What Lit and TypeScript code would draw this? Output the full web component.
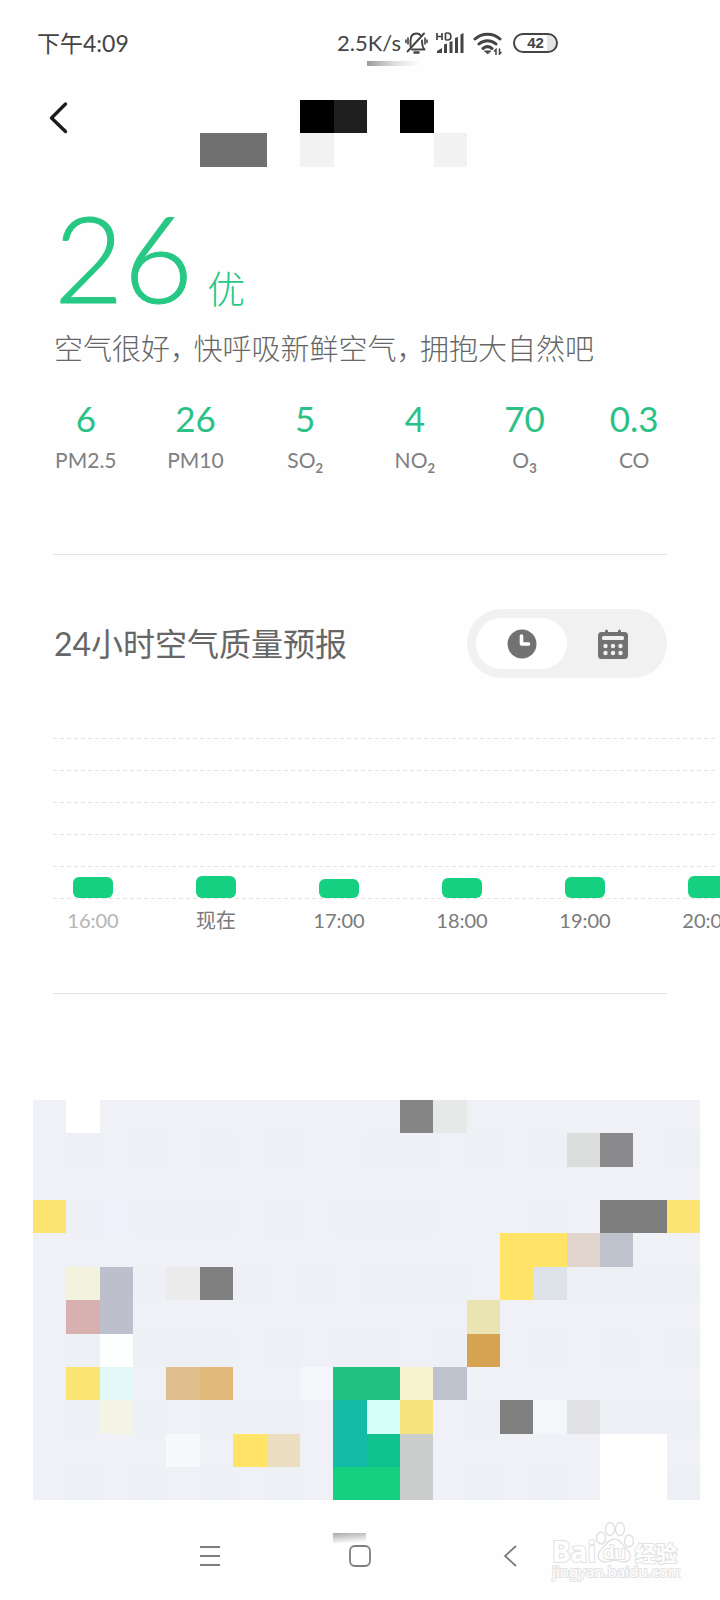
import { LitElement, html, css, svg } from "lit";
import { customElement, property, state } from "lit/decorators.js";
import { styleMap } from "lit/directives/style-map.js";

/** A coarse tile grid; each character of a row is a key of the palette. */
@customElement("tile-grid")
export class TileGrid extends LitElement {
  @property({ attribute: false }) rows: string[] = [];
  @property({ attribute: false }) palette: Record<string, string> = {};

  static styles = css`
    :host { display: block; }
    .grid { display: grid; }
    .cell { aspect-ratio: 1; }
  `;

  render() {
    const cols = this.rows[0]?.length ?? 1;
    return html`<div class="grid" style=${styleMap({ gridTemplateColumns: `repeat(${cols}, 1fr)` })}>
      ${this.rows.map((row) => [...row].map((key) =>
        html`<div class="cell" style=${styleMap({ background: this.palette[key] ?? "transparent" })}></div>`))}
    </div>`;
  }
}

const HEADER_ROWS = ["...AB.A.", "CC.D...D"];
const HEADER_PALETTE = { A: "#000", B: "#1f1f1f", C: "#707070", D: "#f2f2f2" };

const MAP_ROWS = [
  ".w.........ab.......",
  ",;,;,;,;,,;;,;,;cd,;",
  "....................",
  "y;v;;;.;,;;;,,,;,eey",
  "..............YYpq..",
  ",kr;tu;,;,;;;,Yx;;;;",
  ".mr..........n......",
  ",;W;;;.;,;;.;o.;,;,;",
  ".yi,gh..jGGlq.......",
  ",;f;,;;;.TMz.;uAB;;;",
  "....C.YD.TNE.....ww.",
  ",;,;,;,;.KKE,;,;,ww;",
];

const MAP_PALETTE: Record<string, string> = {
  ".": "#f0f1f6", ",": "#eff1f6", ";": "#edf0f5", v: "#f0f0fa",
  w: "#ffffff", W: "#fdffff", a: "#858585", b: "#e7e8e8", c: "#dbdcdc", d: "#8a8a8c",
  e: "#7f7e7f", y: "#fbe472", Y: "#ffe468", p: "#e0d4cc", q: "#bdc2cc",
  k: "#f3f2dc", r: "#bdc0cc", t: "#ebebeb", u: "#808080", x: "#dde2e9",
  m: "#d8b0b0", n: "#eae4b3", o: "#d6a352", i: "#e2f8f6", g: "#e0bd8d", h: "#e0b878",
  j: "#f5f6fa", G: "#21c180", l: "#f8f2cf", f: "#f3f3e6", T: "#13bca4", M: "#d3fff8",
  z: "#f7e37c", A: "#f3f7fa", B: "#e2e2e4", C: "#f8f9fb", D: "#ebdec1", N: "#10c38e",
  E: "#cccdcd", K: "#14d080",
};

interface Pollutant { value: string; name: string; sub?: string; }
const POLLUTANTS: Pollutant[] = [
  { value: "6", name: "PM2.5" },
  { value: "26", name: "PM10" },
  { value: "5", name: "SO", sub: "2" },
  { value: "4", name: "NO", sub: "2" },
  { value: "70", name: "O", sub: "3" },
  { value: "0.3", name: "CO" },
];

const HOURS = [
  { label: "16:00", size: 21, past: true },
  { label: "现在", size: 22 },
  { label: "17:00", size: 19 },
  { label: "18:00", size: 20 },
  { label: "19:00", size: 21 },
  { label: "20:00", size: 22 },
];

const ADVICE = ["空气很好，", "快呼吸新鲜空气，", "拥抱大自然吧"];

@customElement("app-root")
export class AppRoot extends LitElement {
  @state() private view: "hour" | "day" = "hour";

  static styles = css`
    :host {
      display: block;
      background: #fefefe;
      color: #666;
      font-family: Lato, "Noto Sans CJK SC", sans-serif;
      overflow: hidden;
    }
    button { appearance: none; border: 0; padding: 0; margin: 0; background: none; display: grid; place-items: center; cursor: pointer; }
    svg { display: block; }
    h2, p, ul, dl, dd { margin: 0; padding: 0; font-weight: inherit; }

    .status { display: flex; align-items: center; height: 61px; padding: 24px 0 0 37px; box-sizing: border-box; color: #444; font-size: 22px; line-height: 36px; }
    .clock { width: 300px; font-size: 23px; }
    .speed { width: 68px; }
    .bell { margin-right: 8px; }
    .signal { margin-right: 8px; }
    .battery { margin-left: 11px; display: grid; place-items: center; box-sizing: border-box; width: 45px; height: 20px; border: 2px solid #444; border-radius: 10px; font: 700 15px/16px "Liberation Sans", sans-serif; background: linear-gradient(90deg, transparent 32px, #e4e4e4 32px) content-box; }
    .shade { width: 66px; height: 5px; margin-left: 367px; background: linear-gradient(100deg, #999, #ddd 40%, #fefefe 80%); }

    .header { display: flex; align-items: flex-start; padding-top: 34px; height: 67px; }
    .back { width: 36px; height: 34px; margin-left: 42px; margin-right: 122px; }
    .place { width: 267px; }

    .summary { padding: 20px 54px 0; }
    .index { display: flex; align-items: baseline; gap: 14px; color: #26c884; }
    .aqi { font-size: 120px; line-height: 140px; font-weight: 300; -webkit-text-stroke: 1px; }
    .level { font-size: 38px; line-height: 48px; font-weight: 300; }
    .advice { display: flex; gap: 9px; margin-top: 2px; font-size: 29px; line-height: 40px; font-weight: 300; white-space: nowrap; font-feature-settings: "halt"; }

    .pollutants { display: grid; grid-template-columns: repeat(6, 1fr); padding: 24px 31px 0; margin-bottom: 77px; }
    .pollutant { display: flex; flex-direction: column-reverse; align-items: center; }
    .value { color: #2bc186; font-size: 35px; line-height: 50px; }
    .name { color: #808080; font-size: 21px; line-height: 34px; }
    .name sub { font-size: 13px; line-height: 0; font-weight: 700; vertical-align: -5px; }

    .rule { height: 1px; border: 0; margin: 0 53px; background: #e3e3e3; }

    .forecast { margin-bottom: 58px; }
    .forecast-head { display: flex; align-items: center; justify-content: space-between; padding: 54px 53px 0 54px; }
    .title { font-size: 32px; line-height: 44px; }
    .toggle { display: flex; box-sizing: border-box; width: 200px; height: 69px; padding: 9px; border-radius: 35px; background: #f1f1f1; }
    .toggle button { flex: 1; border-radius: 26px; color: #727272; }
    .toggle button[aria-pressed="true"] { background: #fff; }

    .chart { margin: 60px 0 0 53px; }
    .lines { display: grid; align-content: space-between; height: 161px; margin-right: 3px; }
    .line { height: 1px; background: repeating-linear-gradient(90deg, #e3e5e4 0 4px, transparent 4px 7px); }
    .hours { list-style: none; display: flex; gap: 83px; padding-left: 20px; margin-top: -23px; }
    .hour { flex: none; width: 40px; display: flex; flex-direction: column; align-items: center; }
    .slot { display: flex; align-items: flex-end; height: 22px; width: 100%; }
    .bar { width: 100%; border-radius: 6px; background: #14d080; }
    .time { font-size: 20px; line-height: 30px; margin-top: 7px; white-space: nowrap; color: #7a7a7a; }
    .past { color: #b5b5b5; }

    .map { margin: 106px 20px 0 33px; }

    .nav-shade { width: 33px; height: 10px; margin: 33px 0 0 333px; background: linear-gradient(175deg, #aaa, #fefefe 90%); }
    .nav { position: relative; display: flex; justify-content: center; padding-bottom: 31px; }
    .nav button { width: 150px; height: 26px; }
    .watermark { position: absolute; right: 39px; top: -24px; width: 130px; height: 66px; }
    .mark-text { font-family: "Noto Sans", "Noto Sans CJK SC", sans-serif; fill: #fefefe; stroke: #e2e2e2; stroke-width: 2px; paint-order: stroke; }
  `;

  private renderToggle() {
    return html`<div class="toggle" role="group" aria-label="预报视图">
      <button aria-label="按小时" aria-pressed=${this.view === "hour"} @click=${() => (this.view = "hour")}>
        <svg width="30" height="30" viewBox="0 0 30 30"><circle cx="15" cy="15" r="14.5" fill="currentColor"/><path d="M14.5 7v8h7" fill="none" stroke="#fff" stroke-width="3.6" stroke-linecap="round" stroke-linejoin="round"/></svg>
      </button>
      <button aria-label="按天" aria-pressed=${this.view === "day"} @click=${() => (this.view = "day")}>
        <svg width="30" height="30" viewBox="0 0 30 30"><path d="M8.5 2v4M21.5 2v4" stroke="currentColor" stroke-width="3" stroke-linecap="round"/><rect x="0" y="3" width="30" height="27" rx="3.5" fill="currentColor"/><rect x="4" y="7" width="22" height="4" rx="1.5" fill="#f1f1f1"/>${[17, 24].map((y) => [7.5, 15, 22.5].map((x) => svg`<circle cx=${x} cy=${y} r="2.2" fill="#f1f1f1"/>`))}</svg>
      </button>
    </div>`;
  }

  render() {
    return html`
      <div class="status">
        <span class="clock">下午4:09</span>
        <span class="speed">2.5K/s</span>
        <svg class="bell" width="23" height="24" viewBox="0 0 23 24" fill="none" stroke="#444" stroke-width="1.9" stroke-linecap="round" stroke-linejoin="round"><path d="M7 18.5h12.5c-2-2-2.5-4-2.5-9M5.5 15V10c0-5 2.5-7.5 6-7.5 2 0 3.3.7 4.3 2"/><path d="M2.5 20.5L19 2.5"/><path d="M9.5 21.5h4" stroke-width="2.4"/><path d="M3 7v6M1 9v2.5M20 7v6M22 9v2.5" stroke-width="1.6"/></svg>
        <svg class="signal" width="29" height="24" viewBox="0 0 29 24"><path d="M1 2v7M6 2v7M1 5.5h5M9.5 2v7M9.5 2h2c4.5 0 4.5 7 0 7h-2" fill="none" stroke="#444" stroke-width="1.7"/><path d="M1 22v-2l5-3v5zM8 22v-8.5l3-1V22zM13.500 22V11l3-1v12zM19 22V7l3-1v16zM24.500 22V3.500l3-1.500v20z" fill="#444"/></svg>
        <svg width="29" height="24" viewBox="0 0 29 24" fill="none" stroke="#444" stroke-width="3" stroke-linecap="round"><path d="M2 8c7-6.5 18-6.5 25 0M6 13c5-4.5 12-4.5 17 0M10 17.5c3-2.5 6-2.5 9 0"/><path d="M14.5 22.5l-3-2.5h6z" fill="#444" stroke-width="1"/><path d="M23 23.5v-5l-1.5 1.5M26.5 18v5l1.5-1.5" stroke-width="1.5"/></svg>
        <span class="battery">42</span>
      </div>
      <div class="shade"></div>

      <header class="header">
        <button class="back" aria-label="返回">
          <svg width="36" height="36" viewBox="0 0 36 36" fill="none" stroke="#1c1c1c" stroke-width="3.4" stroke-linecap="round" stroke-linejoin="round"><path d="M23.5 4L9.5 18l14 13.5"/></svg>
        </button>
        <tile-grid class="place" .rows=${HEADER_ROWS} .palette=${HEADER_PALETTE}></tile-grid>
      </header>

      <section class="summary">
        <div class="index"><span class="aqi">26</span><span class="level">优</span></div>
        <p class="advice">${ADVICE.map((clause) => html`<span>${clause}</span>`)}</p>
      </section>

      <dl class="pollutants">
        ${POLLUTANTS.map((p) => html`<div class="pollutant">
          <dt class="name">${p.name}${p.sub ? html`<sub>${p.sub}</sub>` : ""}</dt>
          <dd class="value">${p.value}</dd>
        </div>`)}
      </dl>

      <hr class="rule" />

      <section class="forecast">
        <div class="forecast-head"><h2 class="title">24小时空气质量预报</h2>${this.renderToggle()}</div>
        <div class="chart">
          <div class="lines">${[0, 1, 2, 3, 4, 5].map(() => html`<div class="line"></div>`)}</div>
          <ul class="hours">
            ${HOURS.map((h) => html`<li class="hour">
              <div class="slot"><div class="bar" style=${styleMap({ height: `${h.size}px` })}></div></div>
              <span class="time ${h.past ? "past" : ""}">${h.label}</span>
            </li>`)}
          </ul>
        </div>
      </section>

      <hr class="rule" />

      <tile-grid class="map" .rows=${MAP_ROWS} .palette=${MAP_PALETTE}></tile-grid>

      <div class="nav-shade"></div>
      <nav class="nav">
        <button aria-label="最近任务"><svg width="20" height="20" viewBox="0 0 20 20" stroke="#7d7d7d" stroke-width="1.8"><path d="M0 1h20M0 10h20M0 19h20"/></svg></button>
        <button aria-label="主页"><svg width="22" height="22" viewBox="0 0 22 22" fill="none" stroke="#7d7d7d" stroke-width="1.8"><rect x="1" y="1" width="20" height="20" rx="5"/></svg></button>
        <button aria-label="返回上一级"><svg width="14" height="22" viewBox="0 0 14 22" fill="none" stroke="#7d7d7d" stroke-width="1.8"><path d="M13 1L2 11l11 10"/></svg></button>
        <svg class="watermark" viewBox="0 0 130 66">
          <g fill="#fefefe" stroke="#e0e0e0" stroke-width="1.3">
            <ellipse cx="50" cy="19" rx="4.5" ry="6"/><ellipse cx="59" cy="10" rx="4.5" ry="6.5"/><ellipse cx="69" cy="10" rx="4.5" ry="6.5"/><ellipse cx="78" cy="22" rx="4.5" ry="6"/>
            <path d="M63.5 20c6 0 8 6 12 10 6 6 4 13-3 13-4 0-5-2-9-2s-5 2-9 2c-7 0-10-7-4-13 4-4 7-10 13-10z"/>
          </g>
          <text class="mark-text" x="1" y="43" font-size="28" font-weight="700">Bai</text>
          <text class="mark-text" x="52" y="40" font-size="18" font-weight="600">du</text>
          <text class="mark-text" x="84" y="42" font-size="21" font-weight="700">经验</text>
          <text class="mark-text" x="1" y="58" font-size="15">jingyan.baidu.com</text>
        </svg>
      </nav>
    `;
  }
}
